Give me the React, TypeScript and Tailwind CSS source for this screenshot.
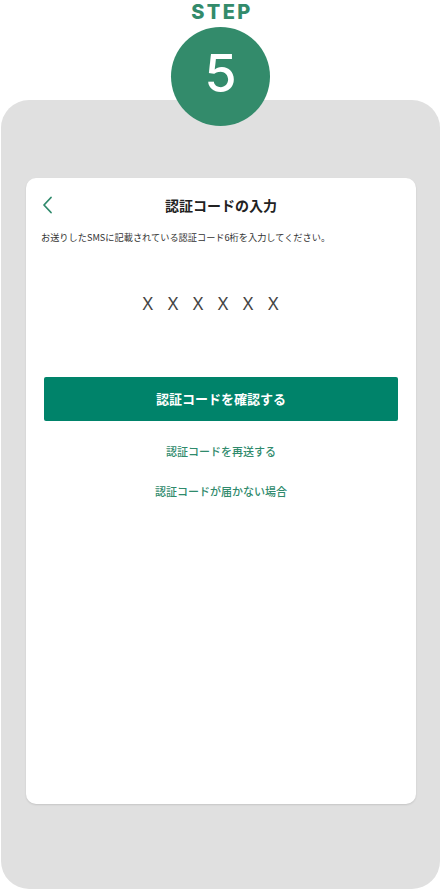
import React from 'react';

const jp = "font-['Noto_Sans_CJK_JP','Noto_Sans',sans-serif]";

function BackIcon() {
  return (
    <svg width="11" height="18" viewBox="0 0 11 18" fill="none">
      <path d="M9 1.5 L2 9 L9 16.5" stroke="#2f8a6c" strokeWidth="1.8" strokeLinecap="round" strokeLinejoin="round" />
    </svg>
  );
}

export default function App() {
  return (
    <div className={`w-[441px] h-[890px] bg-white flex flex-col ${jp}`}>
      {/* Step badge */}
      <p className="h-[21px] text-center text-[20px] leading-[24px] font-extrabold tracking-[0.12em] pl-[3px] text-[#338b6b] font-['Inter',sans-serif]">
        STEP
      </p>
      <div className="relative z-10 mx-auto mt-[6px] w-[99px] h-[99px] rounded-full bg-[#338b6b] flex items-center justify-center">
        <span className="text-white text-[52px] leading-none font-medium font-['Inter',sans-serif] pb-[5px]">5</span>
      </div>

      {/* Phone frame */}
      <div className="-mt-[26px] mx-[1px] h-[789px] rounded-[28px] bg-[#e0e0e0] pt-[78px] pl-[25px] pr-[24px]">
        <div className="h-[626px] rounded-[10px] bg-white shadow-[0_1px_2px_rgba(0,0,0,0.12)] pt-[13px] flex flex-col">
          <div className="h-[28px] grid grid-cols-[1fr_auto_1fr] items-center px-[15px]">
            <div className="pl-[1px] flex items-center">
              <BackIcon />
            </div>
            <h1 className="text-[14px] font-bold text-[#222]">認証コードの入力</h1>
            <div />
          </div>

          <p className="mt-[10px] px-[15px] text-[9.2px] leading-[16px] text-[#333]">
            お送りしたSMSに記載されている認証コード6桁を入力してください。
          </p>

          <div className="mt-[46px] flex justify-center gap-[14.5px] pr-[21px] text-[18px] leading-[24px] text-[#444] font-['Noto_Sans',sans-serif]">
            {['X', 'X', 'X', 'X', 'X', 'X'].map((x, i) => (
              <span key={i}>{x}</span>
            ))}
          </div>

          <div className="mt-[62px] px-[18px]">
            <button className="w-full h-[44px] rounded-[2px] bg-[#00836a] text-white text-[13px] font-bold">
              認証コードを確認する
            </button>
          </div>

          <p className="mt-[22px] text-center text-[11px] leading-[16px] font-medium text-[#2f8a6c]">
            認証コードを再送する
          </p>
          <p className="mt-[24px] text-center text-[11px] leading-[16px] font-medium text-[#2f8a6c]">
            認証コードが届かない場合
          </p>
        </div>
      </div>
    </div>
  );
}
